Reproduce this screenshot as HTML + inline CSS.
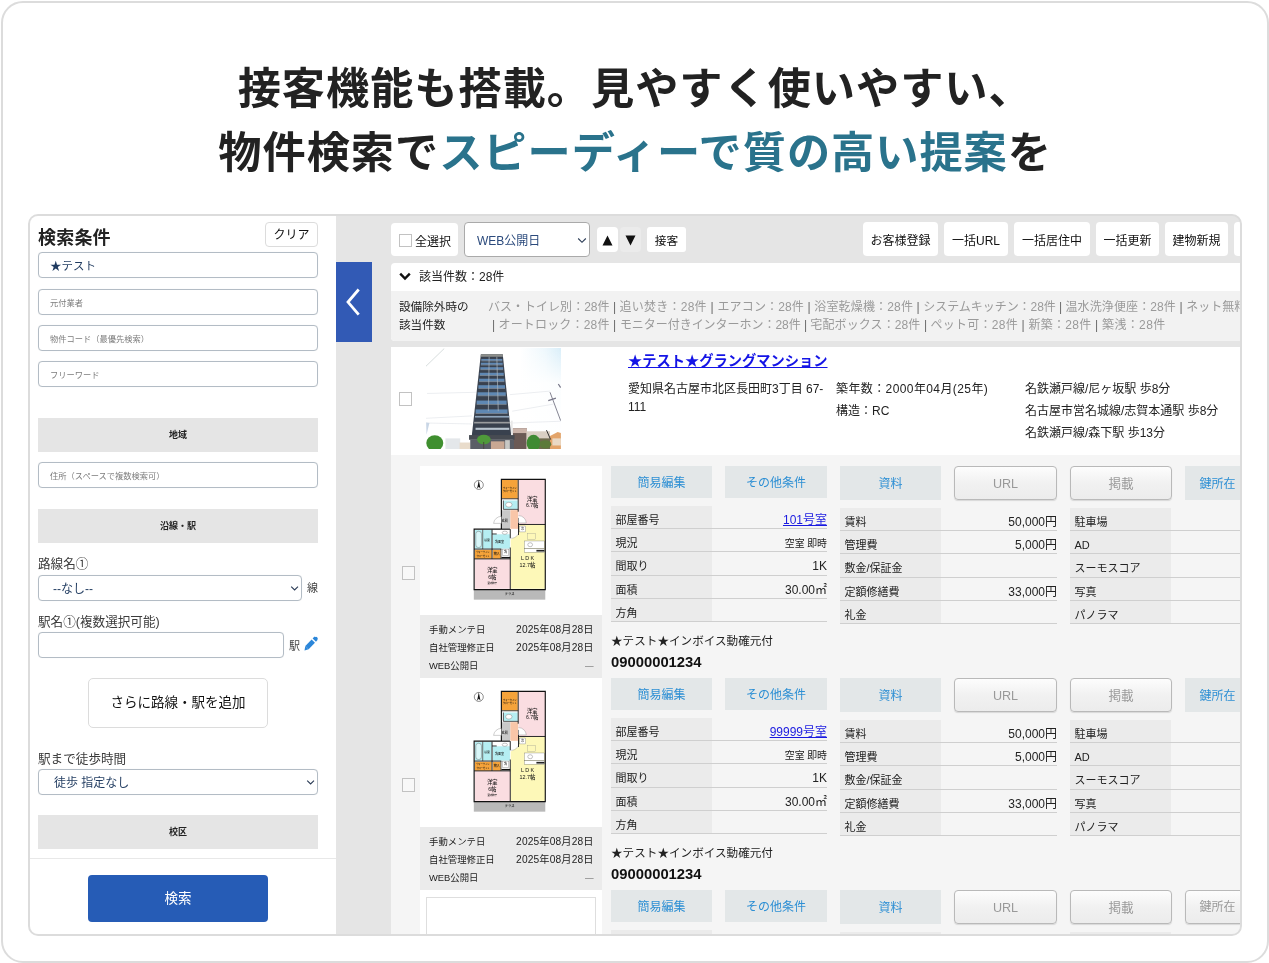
<!DOCTYPE html>
<html lang="ja"><head><meta charset="utf-8"><title>物件検索</title>
<style>
*{box-sizing:border-box;margin:0;padding:0}
html,body{width:1269px;height:963px;overflow:hidden;background:#fff}
.aa{will-change:transform;opacity:.999}
body{position:relative;font-family:"Liberation Sans","Noto Sans CJK JP",sans-serif;color:#222;font-size:13px;line-height:1}
.a{position:absolute;white-space:nowrap}
.outer{left:1px;top:1px;width:1268px;height:962px;border:2px solid #dcdcdc;border-radius:22px}
.hl{left:0;width:1270.3px;text-align:center;font-weight:700;font-size:43.2px;line-height:64px;color:#222;letter-spacing:.98px}
.hl span{color:#2a738c}
.frame{left:28px;top:214px;width:1214px;height:722px;border:2px solid #dcdcdc;border-radius:10px;overflow:hidden;background:#e5e5e5}
.pg{position:absolute;left:-30px;top:-216px;width:1269px;height:963px}
.inp{border:1px solid #b3bcc5;border-radius:4px;background:#fff;left:38px;width:280px;height:26px;font-size:8.25px;color:#7c7c7c;padding-left:11px;line-height:27.6px;box-shadow:0 0 1px rgba(0,0,0,.08)}
.band{left:38px;width:280px;height:34px;background:#e5e5e5;text-align:center;font-size:9px;font-weight:700;line-height:34px;color:#222}
.lbl{left:38px;font-size:12.6px;color:#3c3c3c;line-height:16px}
.tb{background:#fff;border-radius:4px;height:34px;top:222px;font-size:12px;line-height:39px;text-align:center;color:#111}
.cb{width:12.6px;height:13.6px;border:1px solid #c2c2c2;background:#fff}
.gbtn{background:#e3e7e8;color:#2d8fd4;font-size:12px;text-align:center;height:32px;line-height:35px}
.bbtn{border:1px solid #b9b9b9;border-radius:4px;background:linear-gradient(#fdfdfd,#f1f1f1 50%,#ececec);color:#999;font-size:12.6px;text-align:center;height:34px;line-height:34px;box-shadow:0 1px 1px rgba(0,0,0,.12)}
.row{height:23px;border-bottom:1px solid #cfcfcf;font-size:12px;line-height:28px;color:#222}
.row .l{position:absolute;left:0;top:0;height:22px;background:#ebebeb;width:101px;padding-left:4.5px;font-size:11px}
.row .v{position:absolute;right:0;top:0}
.row a{color:#1a1ae0;text-decoration:underline}
.g{color:#9a9a9a}.g i{font-style:normal;color:#6a6a6a}
</style></head><body>
<div class="aa" style="position:absolute;left:0;top:0;width:1269px;height:963px">
<div class="a outer"></div>
<div class="a hl" style="top:57px">接客機能も搭載。見やすく使いやすい、</div>
<div class="a hl" style="top:121px">物件検索で<span>スピーディーで質の高い提案</span>を</div>
<div class="a frame"><div class="pg">
<div class="a" style="left:30px;top:216px;width:306px;height:720px;background:#fff"></div>
<div class="a" style="left:38px;top:226px;font-size:18px;font-weight:700;line-height:24px;color:#222;letter-spacing:.2px">検索条件</div>
<div class="a" style="left:265px;top:222px;width:53px;height:25px;border:1px solid #dcdcdc;border-radius:4px;background:#fff;font-size:12px;line-height:25.5px;text-align:center;color:#111">クリア</div>
<div class="a inp" style="top:252px;font-size:11.5px;line-height:26px;color:#1f3a5f">★テスト</div>
<div class="a inp" style="top:289px">元付業者</div>
<div class="a inp" style="top:325px">物件コード（最優先検索）</div>
<div class="a inp" style="top:361px">フリーワード</div>
<div class="a band" style="top:418px">地域</div>
<div class="a inp" style="top:462px">住所（スペースで複数検索可）</div>
<div class="a band" style="top:509px">沿線・駅</div>
<div class="a lbl" style="top:556px">路線名①</div>
<div class="a inp" style="top:575px;width:264px;font-size:12px;line-height:26px;color:#1f3a5f;padding-left:14px">--なし--<svg style="position:absolute;right:2px;top:9px" width="9" height="7" viewBox="0 0 9 7"><path d="M1.2 1.6 L4.6 5 L8 1.6" fill="none" stroke="#2a3b55" stroke-width="1.1"/></svg></div>
<div class="a" style="left:307px;top:580px;font-size:11px;line-height:16px;color:#444">線</div>
<div class="a lbl" style="top:614px">駅名①(複数選択可能)</div>
<div class="a inp" style="top:632px;width:246px"></div>
<div class="a" style="left:289px;top:637.5px;font-size:11px;line-height:16px;color:#444">駅</div>
<svg class="a" style="left:304px;top:634.5px" width="14" height="16" viewBox="0 0 14 16"><path d="M3 12.7 L9.3 6.1" stroke="#2b86d9" stroke-width="4.6" fill="none"/><path d="M1.34 11.1 L4.66 14.3 L.5 15.6Z" fill="#2b86d9"/><path d="M10.3 5.05 L12.1 3.2" stroke="#2b86d9" stroke-width="4.6" fill="none"/><circle cx="12" cy="3.3" r="1.6" fill="#2b86d9"/></svg>
<div class="a" style="left:88px;top:678px;width:180px;height:50px;border:1px solid #dcdcdc;border-radius:5px;background:#fff;font-size:13.5px;line-height:47.5px;text-align:center;color:#111">さらに路線・駅を追加</div>
<div class="a lbl" style="top:751px">駅まで徒歩時間</div>
<div class="a inp" style="top:769px;font-size:12px;line-height:26px;color:#1f3a5f;padding-left:15px">徒歩 指定なし<svg style="position:absolute;right:2px;top:9px" width="9" height="7" viewBox="0 0 9 7"><path d="M1.2 1.6 L4.6 5 L8 1.6" fill="none" stroke="#2a3b55" stroke-width="1.1"/></svg></div>
<div class="a band" style="top:815px">校区</div>
<div class="a" style="left:30px;top:858px;width:306px;height:1px;background:#e8e8e8"></div>
<div class="a" style="left:88px;top:875px;width:180px;height:47px;border-radius:4px;background:#265cb6;font-size:13.5px;line-height:47px;text-align:center;color:#fff">検索</div>
<div class="a" style="left:336px;top:262px;width:35.5px;height:80px;background:#325ab5"></div>
<svg class="a" style="left:336px;top:262px" width="36" height="80" viewBox="0 0 36 80"><path d="M22.7 27.5 L12 40.1 L22.7 52.7" fill="none" stroke="#fff" stroke-width="2.8"/></svg>
<div class="a tb" style="left:391px;width:67px;top:222.7px;height:33.6px;text-align:left;padding-left:24px">全選択</div>
<div class="a cb" style="left:399px;top:233.6px;height:13.2px"></div>
<div class="a tb" style="left:464px;width:126px;height:34.6px;border:1px solid #aaa;text-align:left;padding-left:12px;font-size:12px;line-height:36px;color:#2b4a7c">WEB公開日<svg style="position:absolute;right:2px;top:14px" width="10" height="8" viewBox="0 0 10 8"><path d="M1.2 1.5 L5 5.3 L8.8 1.5" fill="none" stroke="#2a3b55" stroke-width="1.1"/></svg></div>
<div class="a" style="left:597px;top:227px;width:21px;height:25px;background:#fff;border-radius:4px"></div>
<svg class="a" style="left:602px;top:235px" width="11" height="11" viewBox="0 0 11 11"><path d="M5.5 0.5 L10.5 10.5 L0.5 10.5Z" fill="#111"/></svg>
<div class="a" style="left:620px;top:227px;width:21px;height:25px;background:#ebebeb;border-radius:4px"></div>
<svg class="a" style="left:625px;top:235px" width="11" height="11" viewBox="0 0 11 11"><path d="M0.5 0.5 L10.5 0.5 L5.5 10.5Z" fill="#111"/></svg>
<div class="a" style="left:647px;top:227px;width:39px;height:25px;background:#fff;border-radius:3px;font-size:11.7px;line-height:27px;text-align:center;color:#111">接客</div>
<div class="a tb" style="left:863px;width:75px">お客様登録</div>
<div class="a tb" style="left:944px;width:64px">一括URL</div>
<div class="a tb" style="left:1014px;width:76px">一括居住中</div>
<div class="a tb" style="left:1096px;width:63px">一括更新</div>
<div class="a tb" style="left:1165px;width:63px">建物新規</div>
<div class="a tb" style="left:1234px;width:60px"></div>
<div class="a" style="left:391px;top:262.7px;width:900px;height:78px;background:#fff;border-radius:4px 0 0 4px"></div>
<div class="a" style="left:391px;top:290.5px;width:900px;height:50.2px;background:#f2f2f2;border-radius:0 0 0 4px"></div>
<svg class="a" style="left:399px;top:272px" width="12" height="9" viewBox="0 0 12 9"><path d="M1.2 1.6 L6 6.6 L10.8 1.6" fill="none" stroke="#111" stroke-width="2.4"/></svg>
<div class="a" style="left:419px;top:269px;font-size:12px;line-height:16px;color:#222">該当件数：28件</div>
<div class="a" style="left:399px;top:298px;font-size:11.6px;line-height:18px;color:#222;white-space:normal;width:80px">設備除外時の<br>該当件数</div>
<div class="a g" style="left:488px;top:298px;font-size:12px;line-height:18px"><span style="letter-spacing:0.018px">バス・トイレ別：28件 <i>|</i> </span><span style="letter-spacing:0.260px">追い焚き：28件 <i>|</i> </span><span style="letter-spacing:0.151px">エアコン：28件 <i>|</i> </span><span style="letter-spacing:0.163px">浴室乾燥機：28件 <i>|</i> </span><span style="letter-spacing:-0.049px">システムキッチン：28件 <i>|</i> </span><span style="letter-spacing:0.120px">温水洗浄便座：28件 <i>|</i> </span><span style="letter-spacing:0.000px">ネット無料：28件</span></div>
<div class="a g" style="left:492px;top:316px;font-size:12px;line-height:18px"><i>|</i> <span style="letter-spacing:0.174px">オートロック：28件 <i>|</i> </span><span style="letter-spacing:-0.039px">モニター付きインターホン：28件 <i>|</i> </span><span style="letter-spacing:0.112px">宅配ボックス：28件 <i>|</i> </span><span style="letter-spacing:0.260px">ペット可：28件 <i>|</i> </span><span style="letter-spacing:0.251px">新築：28件 <i>|</i> </span><span style="letter-spacing:0.367px">築浅：28件</span></div>
<div class="a" style="left:391px;top:347px;width:900px;height:108px;background:#fff"></div>
<div class="a" style="left:391px;top:455px;width:900px;height:500px;background:#f5f5f5"></div>
<div class="a cb" style="left:399.1px;top:392.3px"></div>
<svg class="a" style="left:426px;top:348px" width="135" height="101" viewBox="426 348 135 101"><linearGradient id="sky" x1="0" y1="0" x2="1" y2="0"><stop offset="0" stop-color="#ffffff"/><stop offset=".7" stop-color="#ffffff"/><stop offset=".88" stop-color="#eef8fd"/><stop offset="1" stop-color="#d9eef9"/></linearGradient>
<linearGradient id="skyv" x1="0" y1="0" x2="0" y2="1"><stop offset="0" stop-color="#fff" stop-opacity="0"/><stop offset=".35" stop-color="#fff" stop-opacity=".9"/><stop offset="1" stop-color="#fff" stop-opacity="1"/></linearGradient>
<rect x="426" y="348" width="135" height="101" fill="url(#sky)"/>
<rect x="426" y="348" width="135" height="101" fill="url(#skyv)"/>
<path d="M425.91 366.28 L444.23 348.55" stroke="#9aa" stroke-width=".4"/>
<path d="M425.91 418.29 L472.01 415.92 M425.91 423.01 L472.01 423.96 M512.2 411.19 L553.57 404.1 M512.2 423.01 L560.66 421.24 M427.09 393.46 L476.74 392.28 M509.83 394.65 L550.02 391.1" stroke="#d8dde2" stroke-width=".5" fill="none"/>
<path d="M550.02 392.28 L560.66 420.65" stroke="#667" stroke-width=".8"/>
<path d="M548.25 400.56 L555.93 398.19 M558.3 384.01 L560.66 387.55" stroke="#778" stroke-width="1.2"/>
<path d="M426.15 422.42 L429.46 423.01 L426.5 434.83Z" fill="#c9d6e6"/>
<rect x="445.41" y="438.38" width="14.78" height="10.64" fill="#e4e7ea"/>
<rect x="459.6" y="442.52" width="10.64" height="6.5" fill="#e9dccb"/>
<rect x="512.79" y="428.33" width="14.18" height="20.69" fill="#6b5a55"/>
<rect x="512.79" y="428.33" width="14.18" height="4.73" fill="#cbb4aa"/>
<rect x="526.38" y="431.29" width="23.64" height="17.73" fill="#d9cfc4"/>
<rect x="538.2" y="438.38" width="13.0" height="10.64" fill="#6e6a4e"/>
<path d="M550.02 436.02 L557.71 431.88 L560.9 433.06 L560.9 449.02 L550.02 449.02Z" fill="#e3a46a"/>
<rect x="552.39 " y="438.38" width="8.51" height="7.09" fill="#ead9c4"/>
<path d="M546.48 430.11 L550.61 439.56" stroke="#333" stroke-width="1"/>
<polygon points="480.87,354.22 502.74,354.22 511.25,436.02 471.77,436.02" fill="#39414e"/>
<polygon points="480.87,354.22 502.74,354.22 502.98,356.82 480.64,356.82" fill="#8d8f8c"/>
<rect x="481.29" y="358.95" width="20.99" height="1.65" fill="#5f88b3"/>
<rect x="481.29" y="360.6" width="20.99" height="0.71" fill="#c9d3dc" opacity=".55"/>
<rect x="480.87" y="362.73" width="21.81" height="1.91" fill="#5f88b3"/>
<rect x="480.87" y="364.65" width="21.81" height="0.71" fill="#c9d3dc" opacity=".55"/>
<rect x="480.37" y="367.22" width="22.78" height="2.17" fill="#5f88b3"/>
<rect x="480.37" y="369.4" width="22.78" height="0.71" fill="#c9d3dc" opacity=".55"/>
<rect x="479.76" y="372.78" width="23.97" height="2.43" fill="#5f88b3"/>
<rect x="479.76" y="375.21" width="23.97" height="0.71" fill="#c9d3dc" opacity=".55"/>
<rect x="479.1" y="378.69" width="25.24" height="2.7" fill="#5f88b3"/>
<rect x="479.1" y="381.38" width="25.24" height="0.71" fill="#c9d3dc" opacity=".55"/>
<rect x="478.37" y="385.19" width="26.64" height="2.96" fill="#5f88b3"/>
<rect x="478.37" y="388.14" width="26.64" height="0.71" fill="#c9d3dc" opacity=".55"/>
<rect x="477.59" y="392.28" width="28.17" height="3.22" fill="#5f88b3"/>
<rect x="477.59" y="395.5" width="28.17" height="0.71" fill="#c9d3dc" opacity=".55"/>
<rect x="476.66" y="400.56" width="29.95" height="3.48" fill="#5f88b3"/>
<rect x="476.66" y="404.03" width="29.95" height="0.71" fill="#c9d3dc" opacity=".55"/>
<rect x="475.68" y="409.42" width="31.86" height="3.74" fill="#5f88b3"/>
<rect x="475.68" y="413.16" width="31.86" height="0.71" fill="#c9d3dc" opacity=".55"/>
<path d="M489.15 356.82 L488.32 411.19 M496.83 356.82 L498.25 411.19" stroke="#aeb6bd" stroke-width=".7" fill="none"/>
<rect x="474.96" y="415.92" width="34.28" height="1.65" fill="#8fa6bd"/>
<rect x="474.14" y="421.83" width="36.05" height="1.65" fill="#9a9c9e"/>
<rect x="475.56" y="427.74" width="33.69" height="2.13" fill="#b8c4cf"/>
<rect x="469.05" y="435.07" width="45.51" height="4.73" fill="#474b52"/>
<rect x="470.24" y="439.56" width="43.74" height="9.46" fill="#5a5e66"/>
<rect x="490.92" y="441.34" width="13.59" height="7.68" fill="#c9a893"/>
<rect x="505.11" y="440.15" width="4.73" height="8.87" fill="#c8c8c4"/>
<rect x="511.02" y="420.65" width="1.65" height="14.18" fill="#e8e8e8"/>
<ellipse cx="434.78" cy="443.11" rx="8.51" ry="7.8" fill="#3f8f2f"/>
<ellipse cx="483.83" cy="439.56" rx="6.86" ry="4.73" fill="#4f9a3a"/>
<rect x="483.24" y="441.93" width="0.95" height="7.09" fill="#4a4a3a"/>
<ellipse cx="533.48" cy="443.11" rx="6.86" ry="8.27" fill="#3f8a33"/>
<ellipse cx="545.3" cy="444.29" rx="5.91" ry="4.14" fill="#5c7a3a"/></svg>
<div class="a" style="left:628px;top:351px;font-size:14.25px;font-weight:700;line-height:20px;color:#1414e6;text-decoration:underline">★テスト★グラングマンション</div>
<div class="a" style="left:628px;top:380px;font-size:12px;line-height:18px;color:#222;white-space:normal;width:200px">愛知県名古屋市北区長田町3丁目 67-<br>111</div>
<div class="a" style="left:836px;top:378px;font-size:12px;line-height:22px;color:#222"><span style="letter-spacing:.4px">築年数：2000年04月(25年)</span><br>構造：RC</div>
<div class="a" style="left:1025px;top:378px;font-size:12px;line-height:22px;color:#222">名鉄瀬戸線/尼ヶ坂駅 歩8分<br>名古屋市営名城線/志賀本通駅 歩8分<br>名鉄瀬戸線/森下駅 歩13分</div>
<div class="a cb" style="left:402.4px;top:566.1px;background:#f8f8f8"></div>
<div class="a" style="left:420px;top:466px;width:182px;height:149px;background:#fff"></div>
<svg class="a" style="left:450px;top:465px" width="130" height="150" viewBox="450 465 130 150"><rect x="501.84" y="479.79" width="15.88" height="18.68" fill="#f5a33a"/>
<rect x="518.5" y="479.79" width="26.47" height="44.37" fill="#fadde1"/>
<rect x="503.71" y="500.5" width="14.01" height="8.41" fill="#b5eef2"/>
<rect x="501.84" y="510.15" width="8.56" height="17.9" fill="#c9c9c9"/>
<rect x="510.41" y="510.15" width="7.78" height="18.68" fill="#f9c6a8"/>
<rect x="501.84" y="498.47" width="1.87" height="11.68" fill="#fff"/>
<polygon points="518.5,524.94 544.97,524.94 544.97,588.77 510.72,588.77 510.72,539.42 518.5,535.06" fill="#fdf8b8"/>
<rect x="474.91" y="530.08" width="7.47" height="18.53" fill="#b5eef2"/>
<rect x="483.01" y="530.08" width="8.72" height="18.53" fill="#b5eef2"/>
<rect x="492.81" y="530.39" width="17.13" height="3.89" fill="#fff"/>
<rect x="492.81" y="534.28" width="17.13" height="14.32" fill="#b5eef2"/>
<rect x="474.91" y="549.85" width="16.81" height="8.87" fill="#f5a33a"/>
<rect x="492.81" y="549.85" width="7.78" height="8.87" fill="#f5a33a"/>
<rect x="501.84" y="549.07" width="7.63" height="7.01" fill="#fff"/>
<rect x="474.91" y="559.19" width="35.34" height="29.58" fill="#fadde1"/>
<rect x="473.82" y="589.55" width="71.46" height="10.12" fill="#b9b9b9"/>
<rect x="524.42" y="540.98" width="19.93" height="7.32" fill="#fff" stroke="#555" stroke-width="0.3"/>
<rect x="524.42" y="548.76" width="19.93" height="3.43" fill="#fff" stroke="#555" stroke-width="0.3"/>
<rect x="536.41" y="549.85" width="7.94" height="1.71" fill="#222"/>
<rect x="527.84" y="533.5" width="7.47" height="6.23" fill="#fdf8b8" stroke="#888" stroke-width="0.3"/>
<rect x="519.59" y="526.03" width="5.92" height="5.92" fill="#fff" stroke="#555" stroke-width="0.3"/>
<rect x="502.62" y="549.07" width="6.23" height="6.23" fill="#fff" stroke="#555" stroke-width="0.3"/>
<rect x="475.84" y="531.32" width="5.6" height="16.19" rx="2.5" fill="#d8f6f8" stroke="#555" stroke-width=".4"/>
<ellipse cx="508.85" cy="504.7" rx="3.2" ry="2.4" fill="#fff" stroke="#555" stroke-width=".35"/>
<ellipse cx="504.8" cy="532.72" rx="2.6" ry="1.6" fill="#fff" stroke="#555" stroke-width=".35"/>
<ellipse cx="530.18" cy="544.71" rx="2.4" ry="2" fill="#fff" stroke="#555" stroke-width=".35"/>
<path d="M501.38 528.83 L501.38 479.32 L545.28 479.32 L545.28 589.55 L474.13 589.55 L474.13 529.14 L509.94 529.14" fill="none" stroke="#111" stroke-width="1.15"/>
<path d="M518.19 479.32 L518.19 511.71" stroke="#111" stroke-width="0.9" fill="none"/>
<path d="M501.38 498.78 L518.19 498.78" stroke="#111" stroke-width="0.8" fill="none"/>
<path d="M503.4 509.37 L518.19 509.37" stroke="#111" stroke-width="0.7" fill="none"/>
<path d="M503.4 500.5 L503.4 509.37" stroke="#111" stroke-width="0.7" fill="none"/>
<path d="M518.5 524.47 L545.28 524.47" stroke="#111" stroke-width="0.9" fill="none"/>
<path d="M518.5 517.93 L518.5 535.06" stroke="#111" stroke-width="0.9" fill="none"/>
<path d="M510.25 529.14 L510.25 538.17" stroke="#111" stroke-width="0.9" fill="none"/>
<path d="M510.25 547.51 L510.25 589.55" stroke="#111" stroke-width="0.9" fill="none"/>
<path d="M474.13 549.07 L501.38 549.07" stroke="#111" stroke-width="0.9" fill="none"/>
<path d="M474.13 558.88 L510.25 558.88" stroke="#111" stroke-width="0.9" fill="none"/>
<path d="M482.69 529.61 L482.69 549.07" stroke="#111" stroke-width="0.6" fill="none"/>
<path d="M492.04 529.61 L492.04 558.88" stroke="#111" stroke-width="0.9" fill="none"/>
<path d="M500.91 549.07 L500.91 558.88" stroke="#111" stroke-width="0.7" fill="none"/>
<path d="M501.38 557.63 L510.25 557.63" stroke="#111" stroke-width="1.4" fill="none"/>
<path d="M492.04 533.97 L496.71 533.97" stroke="#111" stroke-width="0.8" fill="none"/>
<path d="M501.38 516.38 A7.78 7.78 0 0 0 493.59 523.38 L501.38 523.38" fill="#fff" stroke="#777" stroke-width=".35"/>
<path d="M518.5 515.6 A7.78 7.78 0 0 1 526.29 522.92 L518.5 522.92" fill="#fff" stroke="#777" stroke-width=".35"/>
<path d="M510.25 538.17 A7.78 7.78 0 0 0 518.04 534.28" fill="none" stroke="#777" stroke-width=".35"/>
<circle cx="478.8" cy="484.93" r="4.51" fill="#fff" stroke="#222" stroke-width=".5"/>
<path d="M478.8 480.26 L480.51 488.66 L478.8 486.8 L477.09 488.66Z" fill="#111"/>
<text x="532.2" y="500.5" font-size="5.2" text-anchor="middle" fill="#111" font-weight="500" font-family="&quot;Liberation Sans&quot;,&quot;Noto Sans CJK JP&quot;,sans-serif">洋室</text>
<text x="532.2" y="507.35" font-size="5.2" text-anchor="middle" fill="#111" font-weight="500" font-family="&quot;Liberation Sans&quot;,&quot;Noto Sans CJK JP&quot;,sans-serif">6.7帖</text>
<text x="527.53" y="560.28" font-size="5.4" text-anchor="middle" fill="#111" font-weight="500" font-family="&quot;Liberation Sans&quot;,&quot;Noto Sans CJK JP&quot;,sans-serif">L D K</text>
<text x="527.53" y="566.98" font-size="5.4" text-anchor="middle" fill="#111" font-weight="500" font-family="&quot;Liberation Sans&quot;,&quot;Noto Sans CJK JP&quot;,sans-serif">12.7帖</text>
<text x="492.35" y="572.42" font-size="5.2" text-anchor="middle" fill="#111" font-weight="500" font-family="&quot;Liberation Sans&quot;,&quot;Noto Sans CJK JP&quot;,sans-serif">洋室</text>
<text x="492.35" y="578.96" font-size="5.2" text-anchor="middle" fill="#111" font-weight="500" font-family="&quot;Liberation Sans&quot;,&quot;Noto Sans CJK JP&quot;,sans-serif">6帖</text>
<text x="492.35" y="583.63" font-size="2.4" text-anchor="middle" fill="#111" font-weight="500" font-family="&quot;Liberation Sans&quot;,&quot;Noto Sans CJK JP&quot;,sans-serif">室内物干</text>
<text x="509.63" y="595.16" font-size="3.3" text-anchor="middle" fill="#111" font-weight="500" font-family="&quot;Liberation Sans&quot;,&quot;Noto Sans CJK JP&quot;,sans-serif">テラス</text>
<text x="509.78" y="488.66" font-size="2.3" text-anchor="middle" fill="#111" font-weight="500" font-family="&quot;Liberation Sans&quot;,&quot;Noto Sans CJK JP&quot;,sans-serif">ウォークイン</text>
<text x="509.78" y="492.4" font-size="2.3" text-anchor="middle" fill="#111" font-weight="500" font-family="&quot;Liberation Sans&quot;,&quot;Noto Sans CJK JP&quot;,sans-serif">クローゼット</text>
<text x="504.8" y="521.98" font-size="3" text-anchor="middle" fill="#111" font-weight="500" font-family="&quot;Liberation Sans&quot;,&quot;Noto Sans CJK JP&quot;,sans-serif">玄関</text>
<text x="487.05" y="540.66" font-size="2.8" text-anchor="middle" fill="#111" font-weight="500" font-family="&quot;Liberation Sans&quot;,&quot;Noto Sans CJK JP&quot;,sans-serif">浴室</text>
<text x="499.51" y="542.53" font-size="3" text-anchor="middle" fill="#111" font-weight="500" font-family="&quot;Liberation Sans&quot;,&quot;Noto Sans CJK JP&quot;,sans-serif">洗面室</text>
<text x="483.01" y="553.43" font-size="2.2" text-anchor="middle" fill="#111" font-weight="500" font-family="&quot;Liberation Sans&quot;,&quot;Noto Sans CJK JP&quot;,sans-serif">ウォークイン</text>
<text x="483.01" y="556.54" font-size="2.2" text-anchor="middle" fill="#111" font-weight="500" font-family="&quot;Liberation Sans&quot;,&quot;Noto Sans CJK JP&quot;,sans-serif">クローゼット</text>
<text x="496.71" y="555.3" font-size="3" text-anchor="middle" fill="#111" font-weight="500" font-family="&quot;Liberation Sans&quot;,&quot;Noto Sans CJK JP&quot;,sans-serif">物入</text>
<text x="522.55" y="529.92" font-size="3" text-anchor="middle" fill="#111" font-weight="500" font-family="&quot;Liberation Sans&quot;,&quot;Noto Sans CJK JP&quot;,sans-serif">冷</text>
<text x="505.58" y="553.12" font-size="3" text-anchor="middle" fill="#111" font-weight="500" font-family="&quot;Liberation Sans&quot;,&quot;Noto Sans CJK JP&quot;,sans-serif">洗</text></svg>
<div class="a" style="left:420px;top:615px;width:182px;height:63px;background:#ebebeb"></div>
<div class="a" style="left:429px;top:623px;width:164.5px;font-size:9.4px;line-height:14px;color:#222">手動メンテ日<span style="position:absolute;right:0;font-size:10.2px;letter-spacing:.15px;margin-right:-.15px">2025年08月28日</span></div>
<div class="a" style="left:429px;top:641px;width:164.5px;font-size:9.4px;line-height:14px;color:#222">自社管理修正日<span style="position:absolute;right:0;font-size:10.2px;letter-spacing:.15px;margin-right:-.15px">2025年08月28日</span></div>
<div class="a" style="left:429px;top:659px;width:164.5px;font-size:9.4px;line-height:14px;color:#222">WEB公開日<span style="position:absolute;right:0;font-size:10.2px;letter-spacing:.15px;margin-right:-.15px"><span style="font-size:8.6px;color:#777">—</span></span></div>
<div class="a gbtn" style="left:611px;top:466px;width:101px">簡易編集</div>
<div class="a gbtn" style="left:725px;top:466px;width:102px">その他条件</div>
<div class="a gbtn" style="left:840px;top:466px;width:101px;height:34px;line-height:37px">資料</div>
<div class="a bbtn" style="left:954px;top:466px;width:103px">URL</div>
<div class="a bbtn" style="left:1070px;top:466px;width:102px">掲載</div>
<div class="a gbtn" style="left:1185px;top:466px;width:65px;height:34px;line-height:37px">鍵所在</div>
<div class="a row" style="left:611px;top:506px;width:216px;height:23px"><span class="l" style="height:22px">部屋番号</span><span class="v"><a>101号室</a></span></div>
<div class="a row" style="left:611px;top:529px;width:216px;height:23px"><span class="l" style="height:22px">現況</span><span class="v"><span style="font-size:9.9px">空室 即時</span></span></div>
<div class="a row" style="left:611px;top:552px;width:216px;height:24px"><span class="l" style="height:23px">間取り</span><span class="v">1K</span></div>
<div class="a row" style="left:611px;top:576px;width:216px;height:23px"><span class="l" style="height:22px">面積</span><span class="v">30.00㎡</span></div>
<div class="a row" style="left:611px;top:599px;width:216px;height:23px"><span class="l" style="height:22px">方角</span><span class="v"></span></div>
<div class="a row" style="left:840px;top:508px;width:217px;height:23px"><span class="l" style="height:22px">賃料</span><span class="v">50,000円</span></div>
<div class="a row" style="left:840px;top:531px;width:217px;height:23px"><span class="l" style="height:22px">管理費</span><span class="v">5,000円</span></div>
<div class="a row" style="left:840px;top:554px;width:217px;height:24px"><span class="l" style="height:23px">敷金/保証金</span><span class="v"></span></div>
<div class="a row" style="left:840px;top:578px;width:217px;height:23px"><span class="l" style="height:22px">定額修繕費</span><span class="v">33,000円</span></div>
<div class="a row" style="left:840px;top:601px;width:217px;height:23px"><span class="l" style="height:22px">礼金</span><span class="v"></span></div>
<div class="a row" style="left:1070px;top:508px;width:200px;height:23px"><span class="l" style="height:22px">駐車場</span></div>
<div class="a row" style="left:1070px;top:531px;width:200px;height:23px"><span class="l" style="height:22px">AD</span></div>
<div class="a row" style="left:1070px;top:554px;width:200px;height:24px"><span class="l" style="height:23px">スーモスコア</span></div>
<div class="a row" style="left:1070px;top:578px;width:200px;height:23px"><span class="l" style="height:22px">写真</span></div>
<div class="a row" style="left:1070px;top:601px;width:200px;height:23px"><span class="l" style="height:22px">パノラマ</span></div>
<div class="a" style="left:611px;top:633px;font-size:11.6px;line-height:16px;color:#222">★テスト★インボイス動確元付</div>
<div class="a" style="left:611px;top:654px;font-size:14.8px;font-weight:700;line-height:16px;color:#111">09000001234</div>
<div class="a cb" style="left:402.4px;top:778.1px;background:#f8f8f8"></div>
<div class="a" style="left:420px;top:678px;width:182px;height:149px;background:#fff"></div>
<svg class="a" style="left:450px;top:677px" width="130" height="150" viewBox="450 465 130 150"><rect x="501.84" y="479.79" width="15.88" height="18.68" fill="#f5a33a"/>
<rect x="518.5" y="479.79" width="26.47" height="44.37" fill="#fadde1"/>
<rect x="503.71" y="500.5" width="14.01" height="8.41" fill="#b5eef2"/>
<rect x="501.84" y="510.15" width="8.56" height="17.9" fill="#c9c9c9"/>
<rect x="510.41" y="510.15" width="7.78" height="18.68" fill="#f9c6a8"/>
<rect x="501.84" y="498.47" width="1.87" height="11.68" fill="#fff"/>
<polygon points="518.5,524.94 544.97,524.94 544.97,588.77 510.72,588.77 510.72,539.42 518.5,535.06" fill="#fdf8b8"/>
<rect x="474.91" y="530.08" width="7.47" height="18.53" fill="#b5eef2"/>
<rect x="483.01" y="530.08" width="8.72" height="18.53" fill="#b5eef2"/>
<rect x="492.81" y="530.39" width="17.13" height="3.89" fill="#fff"/>
<rect x="492.81" y="534.28" width="17.13" height="14.32" fill="#b5eef2"/>
<rect x="474.91" y="549.85" width="16.81" height="8.87" fill="#f5a33a"/>
<rect x="492.81" y="549.85" width="7.78" height="8.87" fill="#f5a33a"/>
<rect x="501.84" y="549.07" width="7.63" height="7.01" fill="#fff"/>
<rect x="474.91" y="559.19" width="35.34" height="29.58" fill="#fadde1"/>
<rect x="473.82" y="589.55" width="71.46" height="10.12" fill="#b9b9b9"/>
<rect x="524.42" y="540.98" width="19.93" height="7.32" fill="#fff" stroke="#555" stroke-width="0.3"/>
<rect x="524.42" y="548.76" width="19.93" height="3.43" fill="#fff" stroke="#555" stroke-width="0.3"/>
<rect x="536.41" y="549.85" width="7.94" height="1.71" fill="#222"/>
<rect x="527.84" y="533.5" width="7.47" height="6.23" fill="#fdf8b8" stroke="#888" stroke-width="0.3"/>
<rect x="519.59" y="526.03" width="5.92" height="5.92" fill="#fff" stroke="#555" stroke-width="0.3"/>
<rect x="502.62" y="549.07" width="6.23" height="6.23" fill="#fff" stroke="#555" stroke-width="0.3"/>
<rect x="475.84" y="531.32" width="5.6" height="16.19" rx="2.5" fill="#d8f6f8" stroke="#555" stroke-width=".4"/>
<ellipse cx="508.85" cy="504.7" rx="3.2" ry="2.4" fill="#fff" stroke="#555" stroke-width=".35"/>
<ellipse cx="504.8" cy="532.72" rx="2.6" ry="1.6" fill="#fff" stroke="#555" stroke-width=".35"/>
<ellipse cx="530.18" cy="544.71" rx="2.4" ry="2" fill="#fff" stroke="#555" stroke-width=".35"/>
<path d="M501.38 528.83 L501.38 479.32 L545.28 479.32 L545.28 589.55 L474.13 589.55 L474.13 529.14 L509.94 529.14" fill="none" stroke="#111" stroke-width="1.15"/>
<path d="M518.19 479.32 L518.19 511.71" stroke="#111" stroke-width="0.9" fill="none"/>
<path d="M501.38 498.78 L518.19 498.78" stroke="#111" stroke-width="0.8" fill="none"/>
<path d="M503.4 509.37 L518.19 509.37" stroke="#111" stroke-width="0.7" fill="none"/>
<path d="M503.4 500.5 L503.4 509.37" stroke="#111" stroke-width="0.7" fill="none"/>
<path d="M518.5 524.47 L545.28 524.47" stroke="#111" stroke-width="0.9" fill="none"/>
<path d="M518.5 517.93 L518.5 535.06" stroke="#111" stroke-width="0.9" fill="none"/>
<path d="M510.25 529.14 L510.25 538.17" stroke="#111" stroke-width="0.9" fill="none"/>
<path d="M510.25 547.51 L510.25 589.55" stroke="#111" stroke-width="0.9" fill="none"/>
<path d="M474.13 549.07 L501.38 549.07" stroke="#111" stroke-width="0.9" fill="none"/>
<path d="M474.13 558.88 L510.25 558.88" stroke="#111" stroke-width="0.9" fill="none"/>
<path d="M482.69 529.61 L482.69 549.07" stroke="#111" stroke-width="0.6" fill="none"/>
<path d="M492.04 529.61 L492.04 558.88" stroke="#111" stroke-width="0.9" fill="none"/>
<path d="M500.91 549.07 L500.91 558.88" stroke="#111" stroke-width="0.7" fill="none"/>
<path d="M501.38 557.63 L510.25 557.63" stroke="#111" stroke-width="1.4" fill="none"/>
<path d="M492.04 533.97 L496.71 533.97" stroke="#111" stroke-width="0.8" fill="none"/>
<path d="M501.38 516.38 A7.78 7.78 0 0 0 493.59 523.38 L501.38 523.38" fill="#fff" stroke="#777" stroke-width=".35"/>
<path d="M518.5 515.6 A7.78 7.78 0 0 1 526.29 522.92 L518.5 522.92" fill="#fff" stroke="#777" stroke-width=".35"/>
<path d="M510.25 538.17 A7.78 7.78 0 0 0 518.04 534.28" fill="none" stroke="#777" stroke-width=".35"/>
<circle cx="478.8" cy="484.93" r="4.51" fill="#fff" stroke="#222" stroke-width=".5"/>
<path d="M478.8 480.26 L480.51 488.66 L478.8 486.8 L477.09 488.66Z" fill="#111"/>
<text x="532.2" y="500.5" font-size="5.2" text-anchor="middle" fill="#111" font-weight="500" font-family="&quot;Liberation Sans&quot;,&quot;Noto Sans CJK JP&quot;,sans-serif">洋室</text>
<text x="532.2" y="507.35" font-size="5.2" text-anchor="middle" fill="#111" font-weight="500" font-family="&quot;Liberation Sans&quot;,&quot;Noto Sans CJK JP&quot;,sans-serif">6.7帖</text>
<text x="527.53" y="560.28" font-size="5.4" text-anchor="middle" fill="#111" font-weight="500" font-family="&quot;Liberation Sans&quot;,&quot;Noto Sans CJK JP&quot;,sans-serif">L D K</text>
<text x="527.53" y="566.98" font-size="5.4" text-anchor="middle" fill="#111" font-weight="500" font-family="&quot;Liberation Sans&quot;,&quot;Noto Sans CJK JP&quot;,sans-serif">12.7帖</text>
<text x="492.35" y="572.42" font-size="5.2" text-anchor="middle" fill="#111" font-weight="500" font-family="&quot;Liberation Sans&quot;,&quot;Noto Sans CJK JP&quot;,sans-serif">洋室</text>
<text x="492.35" y="578.96" font-size="5.2" text-anchor="middle" fill="#111" font-weight="500" font-family="&quot;Liberation Sans&quot;,&quot;Noto Sans CJK JP&quot;,sans-serif">6帖</text>
<text x="492.35" y="583.63" font-size="2.4" text-anchor="middle" fill="#111" font-weight="500" font-family="&quot;Liberation Sans&quot;,&quot;Noto Sans CJK JP&quot;,sans-serif">室内物干</text>
<text x="509.63" y="595.16" font-size="3.3" text-anchor="middle" fill="#111" font-weight="500" font-family="&quot;Liberation Sans&quot;,&quot;Noto Sans CJK JP&quot;,sans-serif">テラス</text>
<text x="509.78" y="488.66" font-size="2.3" text-anchor="middle" fill="#111" font-weight="500" font-family="&quot;Liberation Sans&quot;,&quot;Noto Sans CJK JP&quot;,sans-serif">ウォークイン</text>
<text x="509.78" y="492.4" font-size="2.3" text-anchor="middle" fill="#111" font-weight="500" font-family="&quot;Liberation Sans&quot;,&quot;Noto Sans CJK JP&quot;,sans-serif">クローゼット</text>
<text x="504.8" y="521.98" font-size="3" text-anchor="middle" fill="#111" font-weight="500" font-family="&quot;Liberation Sans&quot;,&quot;Noto Sans CJK JP&quot;,sans-serif">玄関</text>
<text x="487.05" y="540.66" font-size="2.8" text-anchor="middle" fill="#111" font-weight="500" font-family="&quot;Liberation Sans&quot;,&quot;Noto Sans CJK JP&quot;,sans-serif">浴室</text>
<text x="499.51" y="542.53" font-size="3" text-anchor="middle" fill="#111" font-weight="500" font-family="&quot;Liberation Sans&quot;,&quot;Noto Sans CJK JP&quot;,sans-serif">洗面室</text>
<text x="483.01" y="553.43" font-size="2.2" text-anchor="middle" fill="#111" font-weight="500" font-family="&quot;Liberation Sans&quot;,&quot;Noto Sans CJK JP&quot;,sans-serif">ウォークイン</text>
<text x="483.01" y="556.54" font-size="2.2" text-anchor="middle" fill="#111" font-weight="500" font-family="&quot;Liberation Sans&quot;,&quot;Noto Sans CJK JP&quot;,sans-serif">クローゼット</text>
<text x="496.71" y="555.3" font-size="3" text-anchor="middle" fill="#111" font-weight="500" font-family="&quot;Liberation Sans&quot;,&quot;Noto Sans CJK JP&quot;,sans-serif">物入</text>
<text x="522.55" y="529.92" font-size="3" text-anchor="middle" fill="#111" font-weight="500" font-family="&quot;Liberation Sans&quot;,&quot;Noto Sans CJK JP&quot;,sans-serif">冷</text>
<text x="505.58" y="553.12" font-size="3" text-anchor="middle" fill="#111" font-weight="500" font-family="&quot;Liberation Sans&quot;,&quot;Noto Sans CJK JP&quot;,sans-serif">洗</text></svg>
<div class="a" style="left:420px;top:827px;width:182px;height:63px;background:#ebebeb"></div>
<div class="a" style="left:429px;top:835px;width:164.5px;font-size:9.4px;line-height:14px;color:#222">手動メンテ日<span style="position:absolute;right:0;font-size:10.2px;letter-spacing:.15px;margin-right:-.15px">2025年08月28日</span></div>
<div class="a" style="left:429px;top:853px;width:164.5px;font-size:9.4px;line-height:14px;color:#222">自社管理修正日<span style="position:absolute;right:0;font-size:10.2px;letter-spacing:.15px;margin-right:-.15px">2025年08月28日</span></div>
<div class="a" style="left:429px;top:871px;width:164.5px;font-size:9.4px;line-height:14px;color:#222">WEB公開日<span style="position:absolute;right:0;font-size:10.2px;letter-spacing:.15px;margin-right:-.15px"><span style="font-size:8.6px;color:#777">—</span></span></div>
<div class="a gbtn" style="left:611px;top:678px;width:101px">簡易編集</div>
<div class="a gbtn" style="left:725px;top:678px;width:102px">その他条件</div>
<div class="a gbtn" style="left:840px;top:678px;width:101px;height:34px;line-height:37px">資料</div>
<div class="a bbtn" style="left:954px;top:678px;width:103px">URL</div>
<div class="a bbtn" style="left:1070px;top:678px;width:102px">掲載</div>
<div class="a gbtn" style="left:1185px;top:678px;width:65px;height:34px;line-height:37px">鍵所在</div>
<div class="a row" style="left:611px;top:718px;width:216px;height:23px"><span class="l" style="height:22px">部屋番号</span><span class="v"><a>99999号室</a></span></div>
<div class="a row" style="left:611px;top:741px;width:216px;height:23px"><span class="l" style="height:22px">現況</span><span class="v"><span style="font-size:9.9px">空室 即時</span></span></div>
<div class="a row" style="left:611px;top:764px;width:216px;height:24px"><span class="l" style="height:23px">間取り</span><span class="v">1K</span></div>
<div class="a row" style="left:611px;top:788px;width:216px;height:23px"><span class="l" style="height:22px">面積</span><span class="v">30.00㎡</span></div>
<div class="a row" style="left:611px;top:811px;width:216px;height:23px"><span class="l" style="height:22px">方角</span><span class="v"></span></div>
<div class="a row" style="left:840px;top:720px;width:217px;height:23px"><span class="l" style="height:22px">賃料</span><span class="v">50,000円</span></div>
<div class="a row" style="left:840px;top:743px;width:217px;height:23px"><span class="l" style="height:22px">管理費</span><span class="v">5,000円</span></div>
<div class="a row" style="left:840px;top:766px;width:217px;height:24px"><span class="l" style="height:23px">敷金/保証金</span><span class="v"></span></div>
<div class="a row" style="left:840px;top:790px;width:217px;height:23px"><span class="l" style="height:22px">定額修繕費</span><span class="v">33,000円</span></div>
<div class="a row" style="left:840px;top:813px;width:217px;height:23px"><span class="l" style="height:22px">礼金</span><span class="v"></span></div>
<div class="a row" style="left:1070px;top:720px;width:200px;height:23px"><span class="l" style="height:22px">駐車場</span></div>
<div class="a row" style="left:1070px;top:743px;width:200px;height:23px"><span class="l" style="height:22px">AD</span></div>
<div class="a row" style="left:1070px;top:766px;width:200px;height:24px"><span class="l" style="height:23px">スーモスコア</span></div>
<div class="a row" style="left:1070px;top:790px;width:200px;height:23px"><span class="l" style="height:22px">写真</span></div>
<div class="a row" style="left:1070px;top:813px;width:200px;height:23px"><span class="l" style="height:22px">パノラマ</span></div>
<div class="a" style="left:611px;top:845px;font-size:11.6px;line-height:16px;color:#222">★テスト★インボイス動確元付</div>
<div class="a" style="left:611px;top:866px;font-size:14.8px;font-weight:700;line-height:16px;color:#111">09000001234</div>
<div class="a cb" style="left:402.4px;top:990.1px;background:#f8f8f8"></div>
<div class="a" style="left:420px;top:890px;width:182px;height:149px;background:#fff"></div>
<div class="a" style="left:426px;top:897px;width:170px;height:140px;border:1px solid #dedede;background:#fff"></div>
<div class="a" style="left:420px;top:1039px;width:182px;height:63px;background:#ebebeb"></div>
<div class="a" style="left:429px;top:1047px;width:164.5px;font-size:9.4px;line-height:14px;color:#222">手動メンテ日<span style="position:absolute;right:0;font-size:10.2px;letter-spacing:.15px;margin-right:-.15px">2025年08月28日</span></div>
<div class="a" style="left:429px;top:1065px;width:164.5px;font-size:9.4px;line-height:14px;color:#222">自社管理修正日<span style="position:absolute;right:0;font-size:10.2px;letter-spacing:.15px;margin-right:-.15px">2025年08月28日</span></div>
<div class="a" style="left:429px;top:1083px;width:164.5px;font-size:9.4px;line-height:14px;color:#222">WEB公開日<span style="position:absolute;right:0;font-size:10.2px;letter-spacing:.15px;margin-right:-.15px"><span style="font-size:8.6px;color:#777">—</span></span></div>
<div class="a gbtn" style="left:611px;top:890px;width:101px">簡易編集</div>
<div class="a gbtn" style="left:725px;top:890px;width:102px">その他条件</div>
<div class="a gbtn" style="left:840px;top:890px;width:101px;height:34px;line-height:37px">資料</div>
<div class="a bbtn" style="left:954px;top:890px;width:103px">URL</div>
<div class="a bbtn" style="left:1070px;top:890px;width:102px">掲載</div>
<div class="a bbtn" style="left:1185px;top:890px;width:65px;font-size:12px;line-height:33px">鍵所在</div>
<div class="a row" style="left:611px;top:930px;width:216px;height:23px"><span class="l" style="height:22px">部屋番号</span><span class="v"><a>10号室</a></span></div>
<div class="a row" style="left:611px;top:953px;width:216px;height:23px"><span class="l" style="height:22px">現況</span><span class="v"><span style="font-size:9.9px">空室 即時</span></span></div>
<div class="a row" style="left:611px;top:976px;width:216px;height:24px"><span class="l" style="height:23px">間取り</span><span class="v">1K</span></div>
<div class="a row" style="left:611px;top:1000px;width:216px;height:23px"><span class="l" style="height:22px">面積</span><span class="v">30.00㎡</span></div>
<div class="a row" style="left:611px;top:1023px;width:216px;height:23px"><span class="l" style="height:22px">方角</span><span class="v"></span></div>
<div class="a row" style="left:840px;top:932px;width:217px;height:23px"><span class="l" style="height:22px">賃料</span><span class="v">50,000円</span></div>
<div class="a row" style="left:840px;top:955px;width:217px;height:23px"><span class="l" style="height:22px">管理費</span><span class="v">5,000円</span></div>
<div class="a row" style="left:840px;top:978px;width:217px;height:24px"><span class="l" style="height:23px">敷金/保証金</span><span class="v"></span></div>
<div class="a row" style="left:840px;top:1002px;width:217px;height:23px"><span class="l" style="height:22px">定額修繕費</span><span class="v">33,000円</span></div>
<div class="a row" style="left:840px;top:1025px;width:217px;height:23px"><span class="l" style="height:22px">礼金</span><span class="v"></span></div>
<div class="a row" style="left:1070px;top:932px;width:200px;height:23px"><span class="l" style="height:22px">駐車場</span></div>
<div class="a row" style="left:1070px;top:955px;width:200px;height:23px"><span class="l" style="height:22px">AD</span></div>
<div class="a row" style="left:1070px;top:978px;width:200px;height:24px"><span class="l" style="height:23px">スーモスコア</span></div>
<div class="a row" style="left:1070px;top:1002px;width:200px;height:23px"><span class="l" style="height:22px">写真</span></div>
<div class="a row" style="left:1070px;top:1025px;width:200px;height:23px"><span class="l" style="height:22px">パノラマ</span></div>
<div class="a" style="left:611px;top:1057px;font-size:11.6px;line-height:16px;color:#222">★テスト★インボイス動確元付</div>
<div class="a" style="left:611px;top:1078px;font-size:14.8px;font-weight:700;line-height:16px;color:#111">09000001234</div>
</div></div>
</div>
</body></html>
